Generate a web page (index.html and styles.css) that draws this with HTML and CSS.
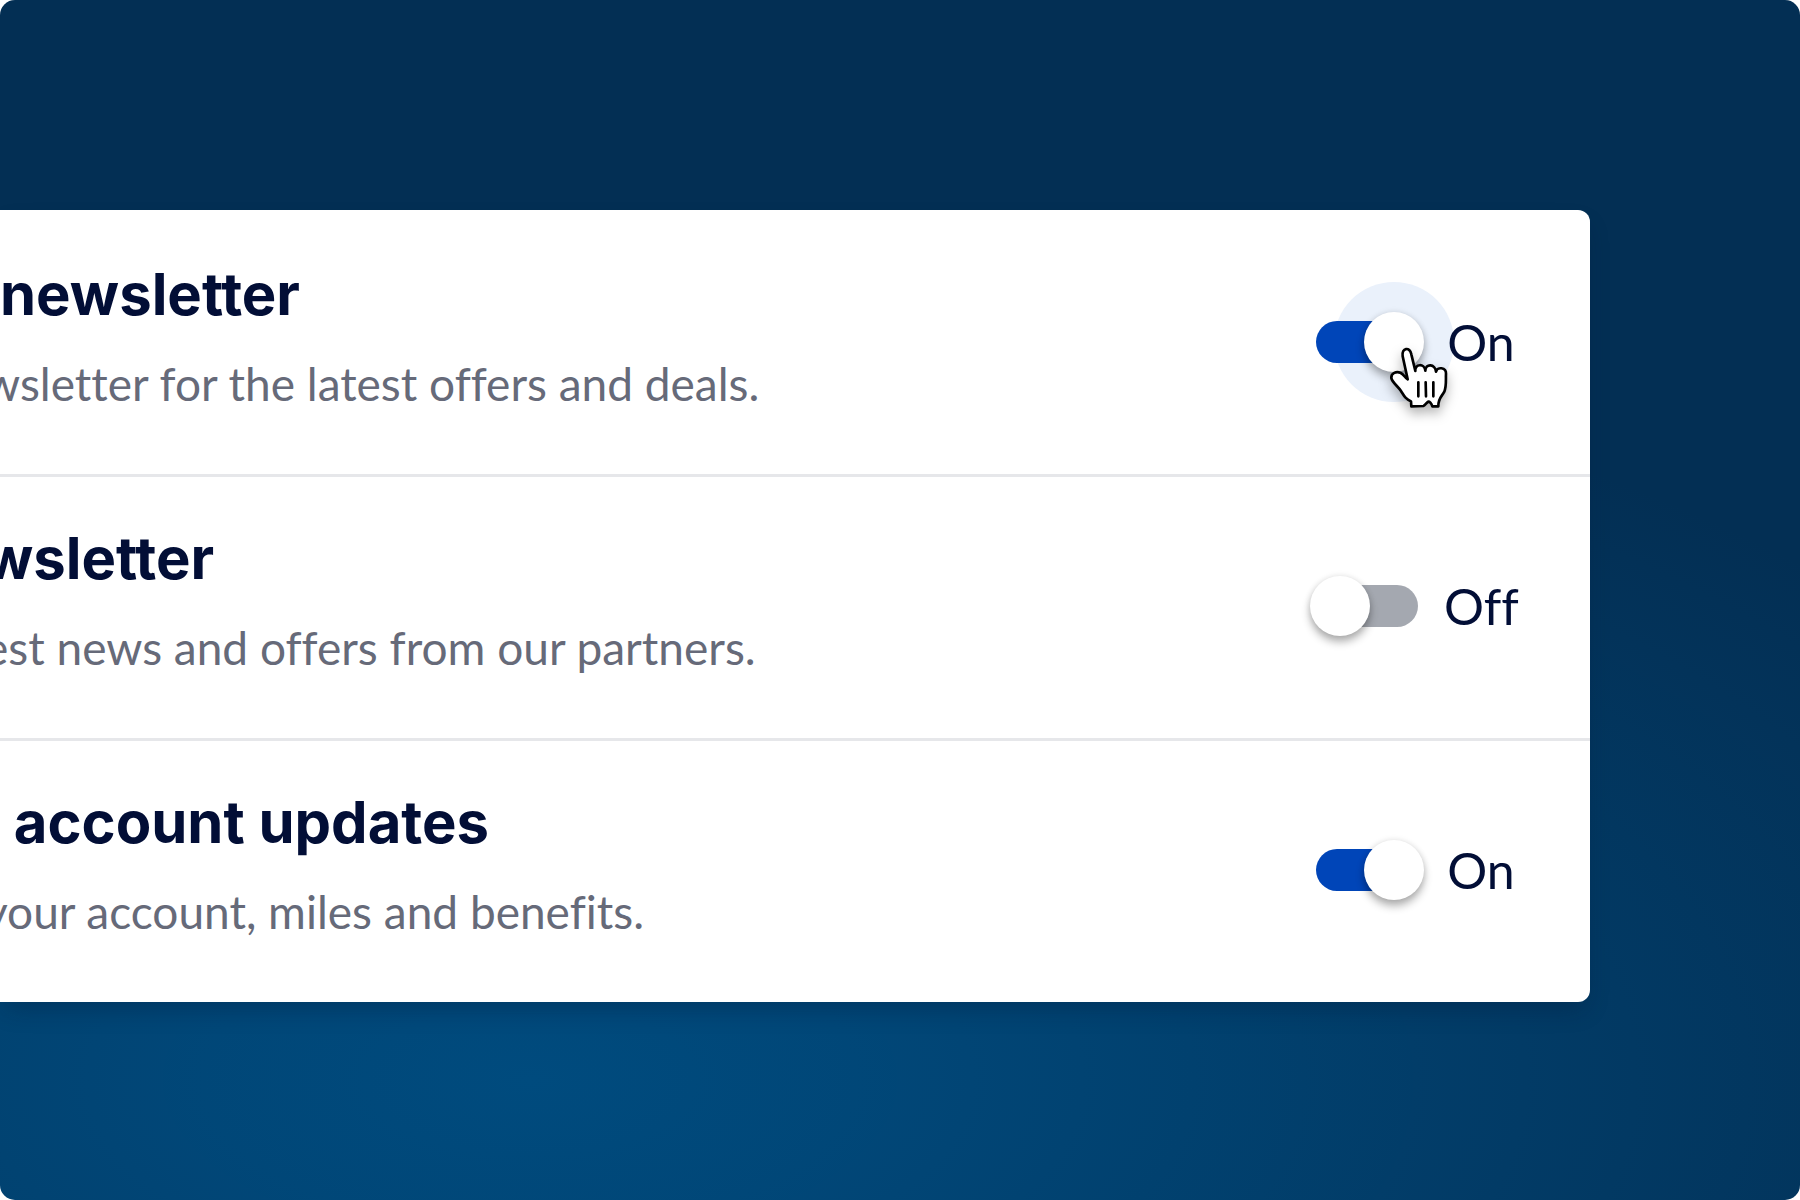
FILE: index.html
```
<!DOCTYPE html>
<html lang="en">
<head>
    <meta charset="UTF-8">
    <meta name="viewport" content="width=device-width, initial-scale=1.0">
    <title>Newsletter settings</title>
    <link rel="stylesheet" href="styles.css">
</head>
<body>
    <main class="page">
        <ul class="card">
            <li class="row">
                <div class="row-text">
                    <h2 class="row-title">newsletter</h2>
                    <p class="row-desc bleed">wsletter for the latest offers and deals.</p>
                </div>
                <label class="toggle">
                    <input class="switch switch-focus" type="checkbox" role="switch" checked>
                    <span class="toggle-label">On</span>
                    <svg class="cursor" viewBox="0 0 225 255" aria-hidden="true">
                        <path class="cursor-hand" d="M68 133 L53 64 C49 38 75 34 79 58 L91 108 C88 86 119 84 121 107 C121 85 151 86 153 110 C156 94 184 97 183 116 C182 134 185 152 178 170 C170 185 159 190 160 214 L142 214 C138 202 134 200 130 200 C126 201 121 211 115 213 L79 214 L78 199 C61 191 58 184 48 168 C39 154 21 142 19 129 C18 114 34 108 46 113 C57 118 60 129 68 133 Z"/>
                        <path class="cursor-lines" d="M100 142 V184 M122 142 L123 184 M145 142 V184"/>
                    </svg>
                </label>
            </li>
            <li class="row">
                <div class="row-text">
                    <h2 class="row-title bleed">wsletter</h2>
                    <p class="row-desc bleed">est news and offers from our partners.</p>
                </div>
                <label class="toggle">
                    <input class="switch" type="checkbox" role="switch">
                    <span class="toggle-label">Off</span>
                </label>
            </li>
            <li class="row">
                <div class="row-text">
                    <h2 class="row-title"> account updates</h2>
                    <p class="row-desc bleed">your account, miles and benefits.</p>
                </div>
                <label class="toggle">
                    <input class="switch" type="checkbox" role="switch" checked>
                    <span class="toggle-label">On</span>
                </label>
            </li>
        </ul>
    </main>
    <script>
        // Keep the On / Off text in step with the switch
        document.querySelectorAll('.switch').forEach(input => {
            input.addEventListener('change', () => {
                input.nextElementSibling.textContent = input.checked ? 'On' : 'Off';
            });
        });
    </script>
</body>
</html>
```

FILE: styles.css
```
* {
    margin: 0;
    padding: 0;
    box-sizing: border-box;
}

body {
    background: #fff;
    color: #020e36;
    font-family: Lato, "Open Sans", sans-serif;
    font-variant-ligatures: no-common-ligatures;
}

.page {
    min-height: 100vh;
    padding: 210px 210px 198px 0;
    border-radius: 15px;
    overflow: hidden;
    background:
        radial-gradient(ellipse 1700px 780px at 530px 1080px, #004b7e 0%, rgba(0, 75, 126, 0.85) 20%, rgba(0, 75, 126, 0.3) 70%, rgba(0, 75, 126, 0) 100%),
        #032f54;
}

.card {
    list-style: none;
    background: #fff;
    border-radius: 0 12px 12px 0;
    box-shadow: 0 12px 24px -6px rgba(0, 20, 50, 0.3);
}

.row {
    display: flex;
    align-items: center;
    justify-content: space-between;
    height: 264px;
    padding-right: 72px;
}

.row + .row {
    box-shadow: inset 0 3px #e6e7ea;
}

.row-text {
    padding-bottom: 12px;
}

.row-title,
.row-desc {
    white-space: pre;
}

.row-title {
    font-family: Inter, "Open Sans", sans-serif;
    font-size: 58px;
    font-weight: 700;
    line-height: 72px;
    margin-bottom: 24px;
}

.row-desc {
    font-size: 46px;
    line-height: 60px;
    color: #666a79;
}

/* Lines that run in from beyond the left edge */
.bleed {
    margin-left: -16px;
}

.toggle {
    position: relative;
    z-index: 0;
    display: flex;
    align-items: center;
    gap: 26px;
    cursor: pointer;
}

.toggle-label {
    width: 74px;
    font-size: 50px;
    line-height: 60px;
    text-align: center;
}

.switch {
    appearance: none;
    position: relative;
    width: 102px;
    height: 42px;
    border-radius: 21px;
    background: #a4a8b0;
    cursor: pointer;
}

.switch::after {
    content: '';
    position: absolute;
    top: -9px;
    left: -6px;
    width: 60px;
    height: 60px;
    border-radius: 50%;
    background: #fff;
    box-shadow: 0 6px 9px rgba(0, 0, 0, 0.3), 0 0 6px rgba(0, 0, 0, 0.1);
}

.switch:checked {
    background: #0045b8;
}

.switch:checked::after {
    left: 48px;
}

/* Halo around the knob */
.switch-focus::before {
    content: '';
    position: absolute;
    z-index: -1;
    top: -39px;
    left: 18px;
    width: 120px;
    height: 120px;
    border-radius: 50%;
    background: #eaf1fb;
}

.cursor {
    position: absolute;
    top: 23px;
    left: 69px;
    width: 75px;
    height: 85px;
    overflow: visible;
    filter: drop-shadow(0 6px 6px rgba(0, 0, 0, 0.3));
}

.cursor-hand {
    fill: #fff;
    stroke: #000;
    stroke-width: 8;
    stroke-linejoin: round;
}

.cursor-lines {
    fill: none;
    stroke: #000;
    stroke-width: 8;
    stroke-linecap: round;
}
```
